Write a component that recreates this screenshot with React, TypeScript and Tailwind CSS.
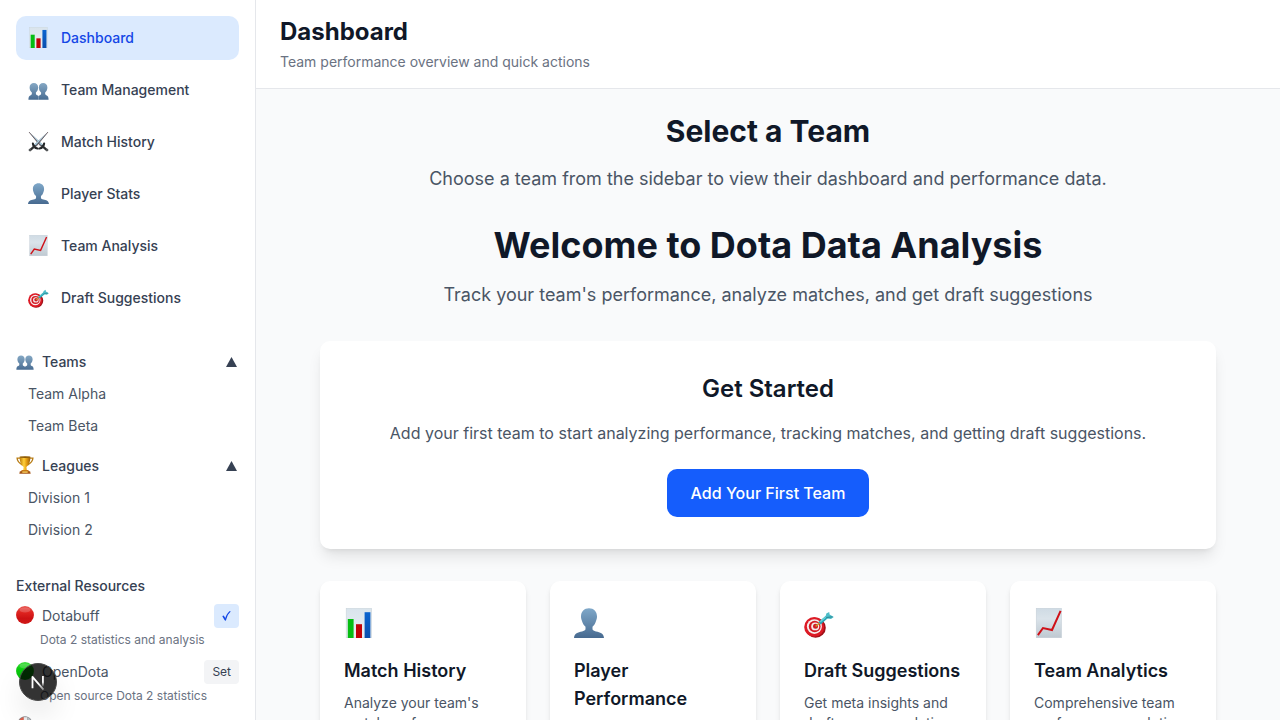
import type { ReactNode } from "react";

type IconProps = { className: string };

function ChartIcon({ className }: IconProps) {
  return (
    <svg viewBox="0 0 30 30" className={className}>
      <defs>
        <linearGradient id="paper" x1="0" y1="0" x2="0" y2="1">
          <stop offset="0" stopColor="#d9e4ec" />
          <stop offset="1" stopColor="#e9eff4" />
        </linearGradient>
        <linearGradient id="barBlue" x1="0" y1="0" x2="0" y2="1">
          <stop offset="0" stopColor="#0a63cf" />
          <stop offset="1" stopColor="#0a4fae" />
        </linearGradient>
      </defs>
      <rect x="2.2" y="0.2" width="25.4" height="29.6" fill="url(#paper)" stroke="#c9d3da" strokeWidth="0.6" />
      <rect x="3.8" y="11" width="5.8" height="19" fill="#06bd12" />
      <rect x="12" y="16.2" width="6" height="13.8" fill="#c20308" />
      <rect x="20.6" y="4.2" width="5.8" height="25.8" fill="url(#barBlue)" />
    </svg>
  );
}

function TrendIcon({ className }: IconProps) {
  return (
    <svg viewBox="0 0 30 30" className={className}>
      <defs>
        <linearGradient id="trendPaper" x1="0" y1="0" x2="0" y2="1">
          <stop offset="0" stopColor="#cfdbe4" />
          <stop offset="0.35" stopColor="#dae3ea" />
          <stop offset="1" stopColor="#bfc9d1" />
        </linearGradient>
      </defs>
      <rect x="2.2" y="0.2" width="25.4" height="29.6" fill="url(#trendPaper)" stroke="#c3cdd5" strokeWidth="0.5" />
      <path d="M3.9 27.2L9 20L18 22L26.6 2.8" fill="none" stroke="#cf1118" strokeWidth="2" />
    </svg>
  );
}

function PersonIcon({ className }: IconProps) {
  return (
    <svg viewBox="0 0 30 30" className={className}>
      <defs>
        <linearGradient id="person" x1="0" y1="0" x2="0" y2="1">
          <stop offset="0" stopColor="#7fa8c9" />
          <stop offset="1" stopColor="#476a90" />
        </linearGradient>
      </defs>
      <path
        d="M15 .3c4.7 0 8 3.200 8 8.200 0 1.800-.4 3-.9 4.300-.7 2.600-1.900 4.600-3.600 5.900v2.600c.3 1.200 1.500 1.700 3.500 2.200 4.200.8 7.500 1.700 8 6.500H0c.5-4.800 3.800-5.700 8-6.500 2-.5 3.200-1 3.500-2.200v-2.600c-1.700-1.300-2.900-3.300-3.600-5.900C7.400 11.500 7 10.300 7 8.500 7 3.500 10.300.3 15 .3z"
        fill="url(#person)"
      />
    </svg>
  );
}

function PeopleIcon({ className }: IconProps) {
  const half =
    "M8.400 5.800c3.600 0 6.100 2.400 6.100 6.200 0 2.900-1.300 5.700-3.200 7.300v2.300c.2.900.9 1.400 1.900 1.700 1.200.4 1.800.8 1.800 1.500v4.800H.6c.1-3.900.9-5.500 2.700-6.200 1.300-.4 2-.9 2.200-1.800v-2.300C3.600 17.700 2.300 14.900 2.300 12c0-3.800 2.500-6.200 6.100-6.200z";
  return (
    <svg viewBox="0 0 30 30" className={className}>
      <defs>
        <linearGradient id="people" x1="0" y1="5" x2="0" y2="29.600" gradientUnits="userSpaceOnUse">
          <stop offset="0" stopColor="#87aac6" />
          <stop offset="1" stopColor="#486c92" />
        </linearGradient>
      </defs>
      <path d={half} fill="url(#people)" />
      <path d={half} fill="url(#people)" transform="translate(30 0) scale(-1 1)" />
    </svg>
  );
}

function Sword() {
  return (
    <>
      <path d="M1.500 1.500L21.500 19.500L18.800 22.400Z" fill="#71808e" />
      <path d="M1.500 1.500L21.500 19.500L20.200 20.900Z" fill="#b5d6e6" />
      <path d="M1.500 1.500L18.800 22.400" stroke="#57464c" strokeWidth="1.100" />
      <path d="M16.300 25C19.500 24.500 22.500 21.500 23 18" stroke="#222426" strokeWidth="3" fill="none" strokeLinecap="round" />
      <path d="M20.500 21.500L27 27.200" stroke="#2c2e30" strokeWidth="3.200" strokeLinecap="round" />
      <circle cx="27.300" cy="27.300" r="1.800" fill="#55585a" />
    </>
  );
}

function SwordsIcon({ className }: IconProps) {
  return (
    <svg viewBox="0 0 30 30" className={className}>
      <g>
        <Sword />
      </g>
      <g transform="translate(30 0) scale(-1 1)">
        <Sword />
      </g>
    </svg>
  );
}

function TargetIcon({ className }: IconProps) {
  return (
    <svg viewBox="0 0 30 30" className={className}>
      <ellipse cx="11.600" cy="19.700" rx="10.200" ry="10" fill="#9e1119" />
      <ellipse cx="10.200" cy="18.900" rx="10" ry="9.900" fill="#dd1a25" />
      <ellipse cx="10.400" cy="18.600" rx="7.500" ry="7.400" fill="#f6eeee" />
      <ellipse cx="10.700" cy="18.500" rx="5.900" ry="5.800" fill="#d51b25" />
      <ellipse cx="11.200" cy="18.400" rx="4" ry="3.900" fill="#f4eaea" />
      <ellipse cx="11.500" cy="18.300" rx="2.500" ry="2.500" fill="#cf1b25" />
      <path d="M11.600 18.300L17 14" stroke="#c99a2c" strokeWidth="1.500" />
      <path d="M15.600 15.200L23.500 8.400" stroke="#28a4b4" strokeWidth="3.200" />
      <path d="M16.300 13.800L23 8" stroke="#69d5da" strokeWidth="1.200" />
      <path d="M21.500 9.200L22.300 5.600L25.200 4L25.600 6.600L29.800 8.900L27 11L22.700 10.500Z" fill="#4dbdc8" />
      <path d="M22.300 9.500L28.500 8.800" stroke="#247f8d" strokeWidth="0.9" />
    </svg>
  );
}

function TrophyIcon({ className }: IconProps) {
  return (
    <svg viewBox="0 0 30 30" className={className}>
      <defs>
        <linearGradient id="gold" x1="0" y1="0" x2="1" y2="0">
          <stop offset="0" stopColor="#b97808" />
          <stop offset="0.400" stopColor="#ffd03a" />
          <stop offset="0.650" stopColor="#e39c10" />
          <stop offset="1" stopColor="#9b5e05" />
        </linearGradient>
      </defs>
      <path d="M7 3.500H1.800C2 9 6 12.500 10.500 15M23 3.500h5.200C28 9 24 12.500 19.500 15" fill="none" stroke="#b87c14" strokeWidth="2.200" />
      <path d="M6 1.200h18c0 8-2 14-6.700 17.200l.7 5.600h-6l.7-5.600C8 15.200 6 9.200 6 1.200z" fill="url(#gold)" />
      <ellipse cx="15" cy="1.800" rx="9" ry="1.400" fill="#8b5a0b" />
      <path d="M9.500 23.500h11l1.500 3H8z" fill="#c97a14" />
      <path d="M6.500 25.500h17l1 4.200h-19z" fill="#a55516" />
      <rect x="10.500" y="25.500" width="9" height="2.600" fill="#f0c554" />
    </svg>
  );
}

function RedBallIcon({ className }: IconProps) {
  return (
    <svg viewBox="0 0 30 30" className={className}>
      <defs>
        <linearGradient id="redBall" x1="0" y1="0" x2="0" y2="1">
          <stop offset="0" stopColor="#e85650" />
          <stop offset="0.350" stopColor="#df2420" />
          <stop offset="0.700" stopColor="#cc1113" />
          <stop offset="1" stopColor="#d01917" />
        </linearGradient>
      </defs>
      <circle cx="15" cy="15" r="14.900" fill="url(#redBall)" />
      <ellipse cx="15" cy="6.500" rx="9" ry="4.200" fill="#fff" opacity="0.180" />
    </svg>
  );
}

function GreenBallIcon({ className }: IconProps) {
  return (
    <svg viewBox="0 0 30 30" className={className}>
      <defs>
        <linearGradient id="greenBall" x1="0" y1="0" x2="0" y2="1">
          <stop offset="0" stopColor="#3fdc3c" />
          <stop offset="0.400" stopColor="#0acb0d" />
          <stop offset="1" stopColor="#05b909" />
        </linearGradient>
      </defs>
      <circle cx="15" cy="15" r="14.900" fill="url(#greenBall)" />
      <ellipse cx="15" cy="6.500" rx="9" ry="4.200" fill="#fff" opacity="0.180" />
    </svg>
  );
}

function DialIcon({ className }: IconProps) {
  return (
    <svg viewBox="0 0 30 30" className={className}>
      <path d="M3 10C5 3 10 .3 15 .3S25 3 27 10v14H3z" fill="#8a8c90" />
      <path d="M5 10C6 5 9 2 13 2v8z" fill="#e0604c" />
      <path d="M13 2h6v8h-6z" fill="#eceeef" />
      <path d="M20 2.500c3 1.500 5 4 5 7.500h-5z" fill="#b9c0c5" />
    </svg>
  );
}

function CaretUp() {
  return (
    <svg viewBox="0 0 11 10" className="mr-0.5 h-2.5 w-[11px]" fill="currentColor">
      <path d="M5.500 0L11 10H0z" />
    </svg>
  );
}

function CheckMark() {
  return (
    <svg viewBox="0 0 9 10" className="h-2.5 w-[9px]" fill="none" stroke="currentColor">
      <path d="M1.300 5.400L3.300 8.600" strokeWidth="1.700" strokeLinecap="round" />
      <path d="M3.400 8.900C4 5.800 5.500 2.600 7.900 .6" strokeWidth="1.200" strokeLinecap="round" />
    </svg>
  );
}

const navItems: { label: string; icon: ReactNode; active?: boolean }[] = [
  { label: "Dashboard", icon: <ChartIcon className="size-[21px]" />, active: true },
  { label: "Team Management", icon: <PeopleIcon className="size-[21px]" /> },
  { label: "Match History", icon: <SwordsIcon className="size-[21px]" /> },
  { label: "Player Stats", icon: <PersonIcon className="size-[21px]" /> },
  { label: "Team Analysis", icon: <TrendIcon className="size-[21px]" /> },
  { label: "Draft Suggestions", icon: <TargetIcon className="size-[21px]" /> },
];

const groups = [
  { label: "Teams", icon: <PeopleIcon className="size-[18px]" />, items: ["Team Alpha", "Team Beta"] },
  { label: "Leagues", icon: <TrophyIcon className="size-[18px]" />, items: ["Division 1", "Division 2"] },
];

const resources = [
  { label: "Dotabuff", text: "Dota 2 statistics and analysis", icon: <RedBallIcon className="size-[18px]" />, set: true },
  { label: "OpenDota", text: "Open source Dota 2 statistics", icon: <GreenBallIcon className="size-[18px]" />, set: false },
];

const features = [
  { title: "Match History", text: "Analyze your team's match performance", icon: <ChartIcon className="size-[30px]" /> },
  { title: "Player Performance", text: "Track individual player statistics", icon: <PersonIcon className="size-[30px]" /> },
  { title: "Draft Suggestions", text: "Get meta insights and draft recommendations", icon: <TargetIcon className="size-[30px]" /> },
  { title: "Team Analytics", text: "Comprehensive team performance analytics", icon: <TrendIcon className="size-[30px]" /> },
];

function Sidebar() {
  return (
    <aside className="h-full w-64 shrink-0 overflow-hidden border-r border-gray-200 bg-white p-4 text-sm text-gray-700">
      <nav className="flex flex-col gap-2">
        {navItems.map((item) => (
          <a
            key={item.label}
            className={
              item.active
                ? "flex h-11 items-center gap-3 rounded-[10px] bg-blue-100 px-3 font-medium text-blue-700"
                : "flex h-11 items-center gap-3 rounded-[10px] px-3 font-medium"
            }
          >
            <span className="pb-px">{item.icon}</span>
            {item.label}
          </a>
        ))}
      </nav>
      <div className="mt-8 flex flex-col gap-4">
        {groups.map((group) => (
          <section key={group.label}>
            <div className="flex h-5 items-center justify-between font-medium">
              <span className="flex items-center gap-2">
                <span className="pb-0.5">{group.icon}</span>
                {group.label}
              </span>
              <CaretUp />
            </div>
            <div className="mt-2 flex flex-col gap-1 text-gray-600">
              {group.items.map((item) => (
                <a key={item} className="px-3 py-1">
                  {item}
                </a>
              ))}
            </div>
          </section>
        ))}
      </div>
      <h3 className="mt-8 mb-2 font-medium">External Resources</h3>
      <div className="flex flex-col gap-3">
        {resources.map((resource) => (
          <div key={resource.label}>
            <div className="flex h-6 items-center justify-between">
              <span className="flex items-center gap-2 text-gray-600">
                <span className="pb-0.5">{resource.icon}</span>
                {resource.label}
              </span>
              <button
                className={
                  resource.set
                    ? "h-6 rounded-[4px] bg-blue-100 px-2 text-xs text-blue-700"
                    : "h-6 rounded-[4px] bg-gray-100 px-2 text-xs text-gray-700"
                }
              >
                {resource.set ? <CheckMark /> : "Set"}
              </button>
            </div>
            <p className="mt-1 ml-6 text-xs text-gray-500">{resource.text}</p>
          </div>
        ))}
        <DialIcon className="size-[18px] shrink-0" />
      </div>
    </aside>
  );
}

function DevBadge() {
  return (
    <div className="absolute top-[663px] left-[19px] flex size-[38px] items-center justify-center rounded-full border border-[#4a4a4a] bg-black/80 shadow-[0_16px_32px_-8px_rgba(0,0,0,0.24)]">
      <svg viewBox="0 0 38 38" className="size-9 shrink-0" fill="none">
        <defs>
          <linearGradient id="stem" x1="0" y1="12" x2="0" y2="24" gradientUnits="userSpaceOnUse">
            <stop stopColor="#fff" />
            <stop offset="0.600" stopColor="#fff" />
            <stop offset="1" stopColor="#fff" stopOpacity="0" />
          </linearGradient>
          <linearGradient id="diagonal" x1="20" y1="20" x2="27" y2="28" gradientUnits="userSpaceOnUse">
            <stop stopColor="#fff" />
            <stop offset="1" stopColor="#fff" stopOpacity="0.300" />
          </linearGradient>
        </defs>
        <path d="M13.200 25.500V13.500L24.800 27" stroke="url(#diagonal)" strokeWidth="1.900" strokeLinejoin="round" />
        <path d="M24.200 12.700V24" stroke="url(#stem)" strokeWidth="1.900" />
      </svg>
    </div>
  );
}

export default function App() {
  return (
    <div className="relative flex h-screen w-full overflow-hidden bg-gray-50 font-['Inter',sans-serif]">
      <Sidebar />
      <div className="flex min-w-0 flex-1 flex-col">
        <header className="shrink-0 border-b border-gray-200 bg-white px-6 py-4">
          <h1 className="text-2xl font-bold text-gray-900">Dashboard</h1>
          <p className="mt-1 text-sm text-gray-500">Team performance overview and quick actions</p>
        </header>
        <main className="min-h-0 flex-1 overflow-hidden p-6">
          <div className="mx-auto max-w-4xl text-center">
            <h2 className="text-3xl font-bold text-gray-900">Select a Team</h2>
            <p className="mt-4 text-lg text-gray-600">
              Choose a team from the sidebar to view their dashboard and performance data.
            </p>
            <h1 className="mt-8 text-4xl font-bold text-gray-900">Welcome to Dota Data Analysis</h1>
            <p className="mt-4 text-lg text-gray-600">
              Track your team's performance, analyze matches, and get draft suggestions
            </p>
            <section className="mt-8 rounded-[10px] bg-white p-8 shadow-lg">
              <h2 className="text-2xl font-semibold text-gray-900">Get Started</h2>
              <p className="mt-4 text-gray-600">
                Add your first team to start analyzing performance, tracking matches, and getting draft suggestions.
              </p>
              <button className="mt-6 h-12 rounded-[10px] bg-blue-600 px-6 font-medium text-white">
                Add Your First Team
              </button>
            </section>
            <div className="mt-8 grid grid-cols-4 gap-6 text-left">
              {features.map((feature) => (
                <article key={feature.title} className="rounded-[10px] bg-white p-6 shadow-md">
                  <div className="flex h-9 items-center">{feature.icon}</div>
                  <h3 className="mt-4 text-lg font-semibold text-gray-900">{feature.title}</h3>
                  <p className="mt-2 text-sm text-gray-600">{feature.text}</p>
                </article>
              ))}
            </div>
          </div>
        </main>
      </div>
      <DevBadge />
    </div>
  );
}
